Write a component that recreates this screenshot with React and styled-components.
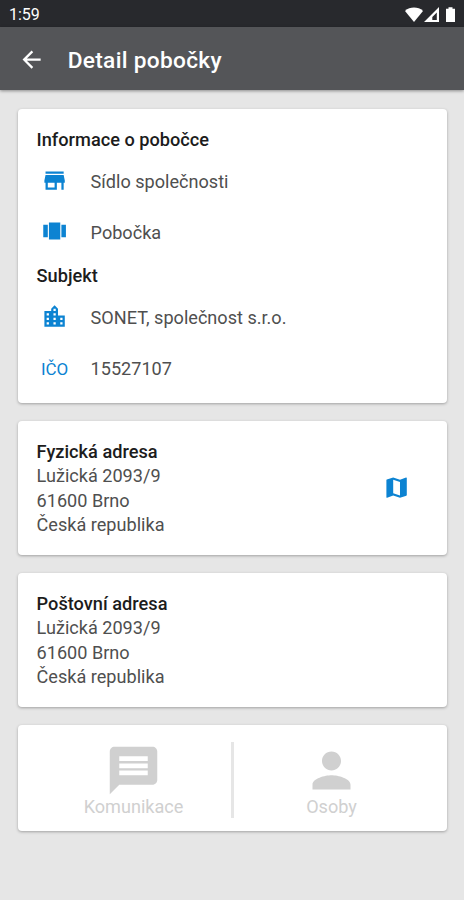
import React from "react"
import styled, { createGlobalStyle } from "styled-components"


const icons = {
    back: "M20 11H7.83l5.59-5.59L12 4l-8 8 8 8 1.41-1.41L7.83 13H20v-2z",
    store: "M20 4H4v2h16V4zm1 10v-2l-1-5H4l-1 5v2h1v6h10v-6h4v6h2v-6h1zm-9 4H6v-4h6v4z",
    carousel: "M7 19h10V4H7v15zm-5-2h4V6H2v11zM18 6v11h4V6h-4z",
    city: "M15 11V5l-3-3-3 3v2H3v14h18V11h-6zm-8 8H5v-2h2v2zm0-4H5v-2h2v2zm0-4H5V9h2v2zm6 8h-2v-2h2v2zm0-4h-2v-2h2v2zm0-4h-2V9h2v2zm0-4h-2V5h2v2zm6 12h-2v-2h2v2zm0-4h-2v-2h2v2z",
    map: "M20.5 3l-.16.03L15 5.1 9 3 3.36 4.9c-.21.07-.36.25-.36.48V20.5c0 .28.22.5.5.5l.16-.03L9 18.9l6 2.1 5.64-1.9c.21-.07.36-.25.36-.48V3.5c0-.28-.22-.5-.5-.5zM15 19l-6-2.11V5l6 2.11V19z",
    message: "M20 2H4c-1.1 0-1.99.9-1.99 2L2 22l4-4h14c1.1 0 2-.9 2-2V4c0-1.1-.9-2-2-2zm-2 12H6v-2h12v2zm0-3H6V9h12v2zm0-3H6V6h12v2z",
    person: "M12 12c2.21 0 4-1.79 4-4s-1.79-4-4-4-4 1.79-4 4 1.79 4 4 4zm0 2c-2.67 0-8 1.34-8 4v2h16v-2c0-2.66-5.33-4-8-4z",
}

const Icon = ({ name, size = 27.2 }) => (
    <Svg viewBox="0 0 24 24" width={size} height={size}>
        <path d={icons[name]} />
    </Svg>
)

const InfoRow = ({ icon, label, children }) => (
    <Row>
        <Lead>{icon ? <Icon name={icon} /> : <LeadText>{label}</LeadText>}</Lead>
        <span>{children}</span>
    </Row>
)

const Address = ({ title }) => (
    <div>
        <Heading>{title}</Heading>
        <Line>Lužická 2093/9</Line>
        <Line>61600 Brno</Line>
        <Line>Česká republika</Line>
    </div>
)

const App = () =>
{
    return(
        <Screen>
            <GlobalStyle />

            <StatusBar>
                <span>1:59</span>
                <StatusIcons width="52" height="18" viewBox="0 0 52 18">
                    <path d="M0 4.9C5 .5 13 .5 18 4.9L9 16z" />
                    <path fillRule="evenodd" d="M34 1v15H19zM31.8 6.500l-4.5 4.5v3h4.5z" />
                    <path d="M43.5 1.3h4v1.500h2.500v13.200h-9V2.800h2.500z" />
                </StatusIcons>
            </StatusBar>

            <AppBar>
                <Icon name="back" />
                <Title>Detail pobočky</Title>
            </AppBar>

            <Content>
                <InfoCard>
                    <Heading>Informace o pobočce</Heading>
                    <Rows>
                        <InfoRow icon="store">Sídlo společnosti</InfoRow>
                        <InfoRow icon="carousel">Pobočka</InfoRow>
                    </Rows>
                    <Heading>Subjekt</Heading>
                    <Rows>
                        <InfoRow icon="city">SONET, společnost s.r.o.</InfoRow>
                        <InfoRow label="IČO">15527107</InfoRow>
                    </Rows>
                </InfoCard>

                <AddressCard>
                    <Address title="Fyzická adresa" />
                    <MapButton>
                        <Icon name="map" />
                    </MapButton>
                </AddressCard>

                <AddressCard>
                    <Address title="Poštovní adresa" />
                </AddressCard>

                <Actions>
                    <Action>
                        <Icon name="message" size={57} />
                        <span>Komunikace</span>
                    </Action>
                    <Divider />
                    <Action>
                        <Icon name="person" size={57} />
                        <span>Osoby</span>
                    </Action>
                </Actions>
            </Content>
        </Screen>
    )

}


const GlobalStyle = createGlobalStyle`

    body
    {
        margin: 0;
        background: #e6e6e6;
    }

    *
    {
        box-sizing: border-box;
    }

`

const Screen = styled.div`

    display: flex;
    flex-direction: column;
    height: 900px;
    overflow: hidden;
    background: #e6e6e6;
    color: #4f4f4f;
    font-family: Roboto, "Liberation Sans", sans-serif;
    font-size: 18.1px;

`

const Svg = styled.svg`

    display: block;
    flex: none;
    fill: currentColor;

`

const StatusBar = styled.div`

    display: flex;
    align-items: center;
    justify-content: space-between;
    height: 27px;
    padding: 2px 7px 0 9px;
    background: #28292d;
    color: #fff;
    font-size: 16px;

`

const StatusIcons = styled.svg`

    fill: #fff;

`

const AppBar = styled.header`

    display: flex;
    align-items: center;
    gap: 22.5px;
    height: 63px;
    padding: 2px 18px 0;
    background: #545558;
    color: #fff;
    box-shadow: 0 1px 3px rgba(0, 0, 0, 0.4);

`

const Title = styled.h1`

    margin: 0;
    padding-top: 2px;
    font-size: 22.7px;
    font-weight: 500;
    letter-spacing: 0.3px;

`

const Content = styled.main`

    display: flex;
    flex-direction: column;
    gap: 18px;
    padding: 19px 17px 0 18px;

`

const Card = styled.section`

    padding: 18px;
    border-radius: 4px;
    background: #fff;
    box-shadow: 0 1px 3px rgba(0, 0, 0, 0.3);

`

const InfoCard = styled(Card)`

    height: 293.6px;
    padding: 19px 18.6px 0;

`

const AddressCard = styled(Card)`

    display: flex;
    align-items: center;
    justify-content: space-between;
    height: 134px;
    padding: 19px 18.6px 17px;

`

const Heading = styled.h2`

    margin: 0;
    color: #1c1c1c;
    font-size: 18.2px;
    font-weight: 500;
    line-height: 24.4px;

`

const Rows = styled.div`

    padding: 4.2px 0 5.4px;

`

const Row = styled.div`

    display: flex;
    align-items: center;
    gap: 18px;
    height: 50.8px;

    svg
    {
        margin-bottom: 2px;
    }

`

const Lead = styled.div`

    display: flex;
    justify-content: center;
    width: 36px;
    color: #0c83d2;

`

const LeadText = styled.span`

    padding-top: 2px;
    font-size: 17px;

`

const Line = styled.div`

    line-height: 24.4px;

`

const MapButton = styled.div`

    padding: 0 18px 3px 0;
    color: #0c83d2;

`

const Actions = styled(Card)`

    display: flex;
    height: 106.5px;
    padding-top: 17px;
    color: #d0d0d0;

`

const Action = styled.div`

    display: flex;
    flex: 1;
    flex-direction: column;
    align-items: center;
    line-height: 16px;

`

const Divider = styled.div`

    width: 3px;
    height: 76px;
    background: #e6e6e6;

`


export default App
